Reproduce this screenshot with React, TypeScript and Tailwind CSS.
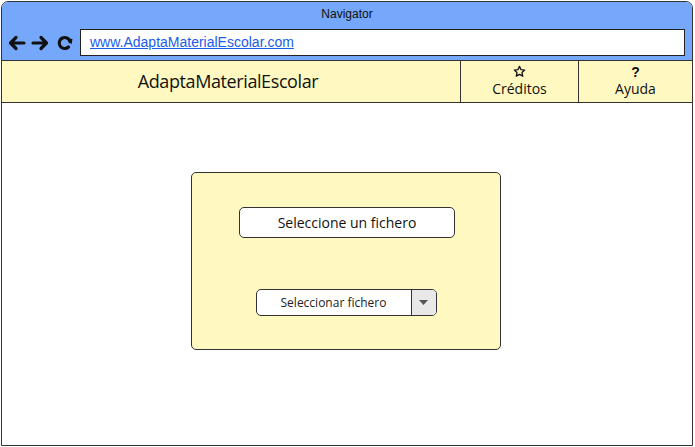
import React from 'react';

const hand = { fontFamily: '"Open Sans", "Noto Sans", sans-serif' };

function NavCell({ icon, label, width }: { icon: React.ReactNode; label: string; width: string }) {
  return (
    <div className={`${width} flex flex-col items-center justify-center border-l border-[#333] leading-none pb-[3px]`}>
      <div className="h-[14px] flex items-center">{icon}</div>
      <span className="mt-[3px] text-[14px] text-[#111]" style={hand}>
        {label}
      </span>
    </div>
  );
}

export default function App() {
  return (
    <div className="w-[695px] h-[447px] bg-white overflow-hidden">
      <div className="ml-[1px] mt-[1px] w-[692px] h-[445px] border-[1.5px] border-[#333] rounded-t-[7px] overflow-hidden flex flex-col">
        {/* Browser chrome */}
        <div className="h-[58px] bg-[#75a8fb] flex flex-col shrink-0">
          <div className="pt-[5px] text-center text-[12px] leading-[15px] text-[#111]" style={{ fontFamily: '"Liberation Sans", Arial, sans-serif' }}>
            Navigator
          </div>
          <div className="mt-[7px] flex items-center pl-[6px] pr-[7px]">
            <svg width="66" height="16" viewBox="0 0 66 16" className="shrink-0">
              <g fill="none" stroke="#111" strokeWidth="3.2" strokeLinecap="round" strokeLinejoin="round">
                <path d="M16 8H3M8 2.5 2.5 8 8 13.5" />
                <path d="M25 8h13M33 2.5 38.5 8 33 13.5" />
                <path d="M62 6.5A5.5 5.5 0 1 0 60.5 12" />
              </g>
              <path d="M59 3.5 64.5 4 63.5 9.5Z" fill="#111" />
            </svg>
            <div className="ml-[6px] flex-1 h-[27px] bg-white border-[1.5px] border-[#222] flex items-center pl-[9px]">
              <span className="text-[14px] text-[#1a5be8] underline" style={{ fontFamily: '"Liberation Sans", Arial, sans-serif' }}>
                www.AdaptaMaterialEscolar.com
              </span>
            </div>
          </div>
        </div>

        {/* App navigation bar */}
        <div className="h-[43px] shrink-0 flex bg-[#fff9c1] border-y border-[#333]">
          <div className="flex-1 flex items-center justify-center pb-[1px] pr-[6px]">
            <span className="text-[18px] text-[#111] tracking-[-0.4px]" style={hand}>
              AdaptaMaterialEscolar
            </span>
          </div>
          <NavCell
            width="w-[118px]"
            label="Créditos"
            icon={
              <svg width="13" height="13" viewBox="0 0 24 24">
                <path
                  d="M12 2.5l2.9 6.2 6.7.7-5 4.6 1.4 6.6L12 17.3l-6 3.3 1.4-6.6-5-4.6 6.7-.7z"
                  fill="none"
                  stroke="#111"
                  strokeWidth="2.4"
                  strokeLinejoin="round"
                />
              </svg>
            }
          />
          <NavCell
            width="w-[114px]"
            label="Ayuda"
            icon={<span className="text-[14px] font-bold text-[#111]" style={{ fontFamily: '"Liberation Sans", Arial, sans-serif' }}>?</span>}
          />
        </div>

        {/* Page body */}
        <div className="flex-1 bg-white">
          <div className="ml-[189px] mt-[69px] w-[310px] h-[178px] bg-[#fff9c1] border-[1.5px] border-[#333] rounded-[5px] flex flex-col items-center">
            <div className="mt-[34px] ml-[2px] w-[216px] h-[31px] bg-white border-[1.5px] border-[#333] rounded-[5px] flex items-center justify-center">
              <span className="text-[14px] text-[#111]" style={hand}>
                Seleccione un fichero
              </span>
            </div>
            <div className="mt-[51px] w-[181px] h-[27px] bg-white border-[1.5px] border-[#333] rounded-[5px] flex overflow-hidden">
              <div className="flex-1 flex items-center justify-center">
                <span className="text-[12px] text-[#222]" style={hand}>
                  Seleccionar fichero
                </span>
              </div>
              <div className="w-[25px] bg-[#e8e8e8] border-l border-[#333] flex items-center justify-center">
                <svg width="9" height="5" viewBox="0 0 9 5">
                  <path d="M0 0h9L4.5 5z" fill="#555" />
                </svg>
              </div>
            </div>
          </div>
        </div>
      </div>
    </div>
  );
}
